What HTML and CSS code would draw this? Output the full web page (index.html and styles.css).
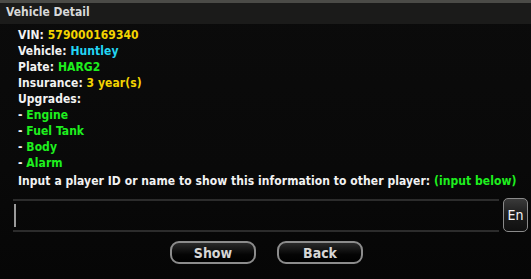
FILE: index.html
```html
<!DOCTYPE html>
<html lang="en">
<head>
  <meta charset="UTF-8" />
  <title>Vehicle Detail</title>
  <link rel="stylesheet" href="styles.css">
</head>
<body>
  <div class="dialog">
    <!-- Title -->
    <div class="title">Vehicle Detail</div>

    <!-- Info -->
    <div class="info">
      <div>VIN: <span class="yellow">579000169340</span></div>
      <div>Vehicle: <span class="cyan">Huntley</span></div>
      <div>Plate: <span class="green">HARG2</span></div>
      <div>Insurance: <span class="yellow">3 year(s)</span></div>
      <div>Upgrades:</div>
      <div>- <span class="green">Engine</span></div>
      <div>- <span class="green">Fuel Tank</span></div>
      <div>- <span class="green">Body</span></div>
      <div>- <span class="green">Alarm</span></div>
      <div class="prompt">Input a player ID or name to show this information to other player: <span class="green">(input below)</span></div>
    </div>

    <!-- Input -->
    <div class="input-row">
      <div class="input"><span class="caret"></span></div>
      <div class="lang">En</div>
    </div>

    <!-- Buttons -->
    <div class="buttons">
      <div class="btn">Show</div>
      <div class="btn">Back</div>
    </div>
  </div>
</body>
</html>
```

FILE: styles.css
```css
* {
  box-sizing: border-box;
}

body {
  margin: 0;
  width: 531px;
  height: 279px;
  overflow: hidden;
  background-color: #070707;
  font-family: "DejaVu Sans Condensed", "DejaVu Sans", Tahoma, sans-serif;
  font-stretch: condensed;
  font-weight: bold;
  color: #f2f2f2;
}

.dialog {
  height: 279px;
  border-top: 3px solid #4b4b47;
  background: linear-gradient(180deg, #0b0b0b 0%, #090909 60%, #060606 100%);
}

.title {
  height: 21px;
  padding: 2px 0 0 6px;
  background-color: #1b1b1a;
  color: #d8d8d8;
  font-size: 12px;
}

.info {
  padding: 3px 0 0 18px;
  font-size: 12px;
  line-height: 16px;
  letter-spacing: 0.06px;
}

.info .prompt {
  margin-top: 2px;
}

.yellow {
  color: #f4d400;
}

.cyan {
  color: #22d6f5;
}

.green {
  color: #1ef01e;
}

.input-row {
  display: flex;
  align-items: center;
  margin-top: 9px;
  padding-left: 13px;
}

.input {
  flex: 1;
  height: 33px;
  border-top: 2px solid #2c2c2c;
  border-bottom: 2px solid #2c2c2c;
  display: flex;
  align-items: center;
  padding-left: 1px;
}

.caret {
  width: 2px;
  height: 23px;
  background-color: #9a9a9a;
}

.lang {
  width: 25px;
  height: 34px;
  margin: 0 3px 0 4px;
  border: 1px solid #8a8a8a;
  border-radius: 5px;
  background: linear-gradient(180deg, #3a3a3a 0%, #1c1c1c 50%, #101010 100%);
  color: #f4f4f4;
  font-size: 14px;
  font-weight: normal;
  display: flex;
  align-items: center;
  justify-content: center;
}

.buttons {
  display: flex;
  justify-content: center;
  gap: 21px;
  margin-top: 9px;
  padding-left: 2px;
}

.btn {
  width: 86px;
  height: 23px;
  border: 2px solid #8c8c8c;
  border-radius: 9px;
  background: linear-gradient(180deg, #2a2a2a 0%, #050505 60%, #000 100%);
  color: #d6d6d6;
  font-size: 14px;
  display: flex;
  align-items: center;
  justify-content: center;
}
```
